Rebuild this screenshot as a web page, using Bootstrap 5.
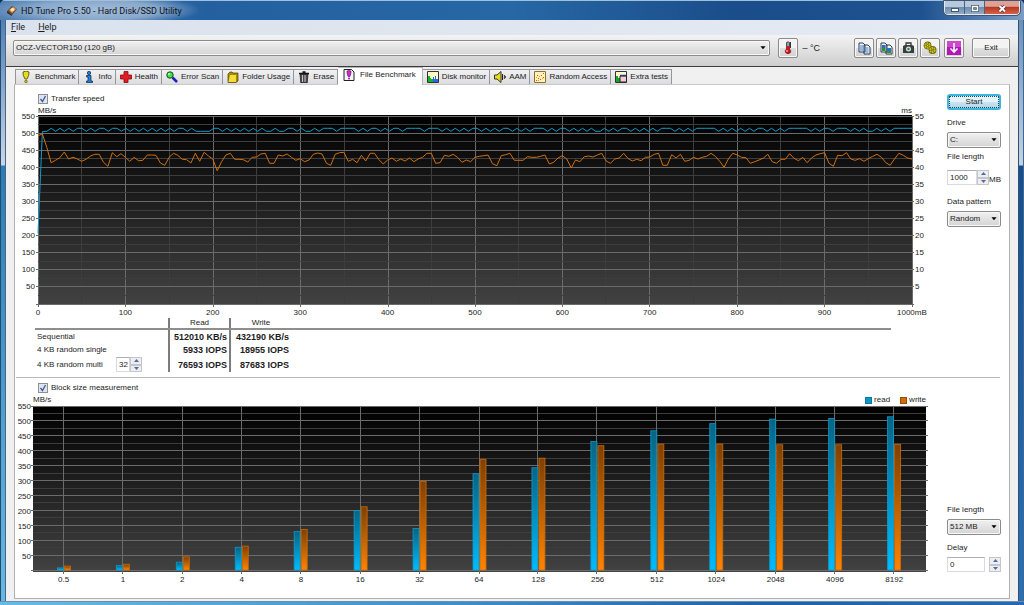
<!DOCTYPE html>
<html lang="en">
<head>
<meta charset="utf-8">
<meta name="viewport" content="width=device-width, initial-scale=1">
<title>HD Tune Pro 5.50 - Hard Disk/SSD Utility</title>
<link href="https://cdn.jsdelivr.net/npm/bootstrap@5.3.0/dist/css/bootstrap.min.css" rel="stylesheet">
<style>
  body { font: 8px/10px "Liberation Sans", Arial, sans-serif; color: #1c1c1c; background: #0c2f5c; }
  .win { min-height: 100vh; border-radius: 5px 5px 0 0; overflow: hidden; background: #2a6db0; }
  .caption-bar { height: 20px; padding-left: 7px; border-top: 1px solid #9fc0dc; color: #10131a;
    background: radial-gradient(ellipse 105px 16px at 95px 9px, #a3bdd9 0, #88a8cb 60%, transparent 100%),
      linear-gradient(90deg, #5582b4 0, #2460a0 20%, #2767a5 50%, #1a4d8a 72%, #1d5190 90%, #7c9dc2 100%); }
  .caption-bar h1 { font: 9px/12px Roboto, sans-serif; }
  .win-ctl { height: 14px; border: 1px solid #e2ebf3; border-top: 0; border-radius: 0 0 4px 4px; outline: 1px solid #42546c; overflow: hidden; }
  .win-ctl button { border: 0; border-right: 1px solid #4c607a; padding: 0; width: 20px; background: linear-gradient(#b7c9dc 45%, #6f8dae 50%, #91adca); }
  .win-ctl .shut { width: 34px; border-right: 0; background: linear-gradient(#dfa195 40%, #b93a22 50%, #d4614a); }
  .side-l { width: 6px; flex: none; border-left: 1px solid #254a70; border-right: 1px solid #4a6580;
    background: linear-gradient(#4f80b8 0, #c9d7e7 145px, #2a7db4 146px, #66b9e4 100%); }
  .side-r { width: 6px; flex: none; border-left: 1px solid #33506f; border-right: 1px solid #3d6793;
    background: linear-gradient(#6b90ba 0, #c4d3e4 145px, #164d8d 146px, #2b70b6 100%); }
  .foot { height: 4px; border-top: 1px solid #6c8fae; background: linear-gradient(90deg, #67bce4, #3b8fcb 45%, #1e60aa 75%, #2769b4); }
  .client { background: #f0f0f0; min-width: 0; }
  .menu { height: 15px; padding-left: 5px; gap: 13px; background: linear-gradient(90deg, #dae2ed, #e5ebf4); font: 9px/14px Roboto, sans-serif; }
  .menu a { color: #1c1c1c; text-decoration: none; }
  .tools { height: 32px; padding: 0 8px 5px 7px; border-bottom: 1px solid #3c3c3c; background: linear-gradient(#f3f3f3, #cecece); }
  .face { border: 1px solid #8b8b8b; border-radius: 2px; color: #1c1c1c; padding: 0; font-size: 8px; line-height: 10px;
    background: linear-gradient(#f3f3f3 48%, #dfdfdf 50%, #d2d2d2); box-shadow: inset 0 0 0 1px #f8f8f8; }
  .tool { width: 20px; height: 20px; display: flex; align-items: center; justify-content: center; }
  .tool-set { gap: 2px; }
  .temp { font-size: 9px; margin-right: 34px; }
  .exit { width: 38px; height: 20px; }
  select.face { appearance: none; width: 100%; height: 16px; padding: 0 12px 0 2px;
    background: url("data:image/svg+xml,%3Csvg xmlns='http://www.w3.org/2000/svg' viewBox='0 0 7 4'%3E%3Cpath d='M.5 0h6L3.500 3.500z'/%3E%3C/svg%3E") no-repeat right 3px center/6px 4px, linear-gradient(#f1f1f1, #d4d4d4); }
  .tabs { padding: 2px 0 0 9px; border: 0; height: 17px; align-items: flex-end; flex-wrap: nowrap; }
  .tabs .nav-link { display: flex; align-items: center; gap: 3px; height: 15px; padding: 0 3px 0 4px; margin: 0; white-space: nowrap; color: #1c1c1c;
    border: 1px solid #95959b; border-width: 1px 1px 0 0; border-radius: 0; background: linear-gradient(#f1f1f2, #dcdce0); }
  .tabs li:first-child .nav-link { border-left-width: 1px; }
  .tabs .nav-link.active { height: 18px; margin-bottom: -1px; padding: 0 6px 3px 5px; gap: 5px; background: #fff; color: #1c1c1c; position: relative; z-index: 1; border-color: #b5b5ba; }
  .tabs svg { width: 12px; height: 12px; }
  .sheet { margin: 0 8px 2px; border: 1px solid #b0b0b4; border-top-color: #c9c9cc; background: #fff; }
  .tick-row { display: flex; align-items: center; gap: 3px; margin-left: 23px; height: 12px; }
  .tick-row input { appearance: none; width: 10px; height: 10px; margin: 0; border: 1px solid #8b8f96;
    background: #dfe5ee url("data:image/svg+xml,%3Csvg xmlns='http://www.w3.org/2000/svg' viewBox='0 0 8 8'%3E%3Cpath d='M1.500 4l2 2.500L6.500 1' fill='none' stroke='%23405a94' stroke-width='1.300'/%3E%3C/svg%3E"); }
  .plot { display: grid; }
  .plot-a { grid-template-columns: 23px 1fr 35px; grid-template-rows: 10px 190px 13px; }
  .plot-b { grid-template-columns: 18px 1fr 21px; grid-template-rows: 12px 166px 14px; }
  .plot svg { grid-column: 2; grid-row: 2; width: 100%; height: 100%; overflow: visible; background: linear-gradient(#000 0, #0a0a0a 15%, #424242 100%); display: block; min-width: 0; }
  .unit { grid-column: 2; grid-row: 1; display: flex; justify-content: space-between; align-items: flex-end; line-height: 8px; }
  .yax { grid-row: 2; display: flex; flex-direction: column; margin: -7px 0 9px; text-align: right; padding-right: 3px; }
  .plot-b .yax { margin: -6px 0 8px; padding-right: 2px; }
  .yax.far { grid-column: 3; text-align: left; padding-left: 3px; }
  .yax span { flex: 1; display: flex; align-items: center; justify-content: flex-end; }
  .yax.far span { justify-content: flex-start; }
  .xax { grid-column: 2; grid-row: 3; display: flex; justify-content: space-between; align-items: center; text-align: center; padding-top: 2px; }
  .plot-a .xax { margin: 0 -20px; }
  .plot-a .xax span { width: 40px; }
  .plot-b .xax { margin: 0 2px 0 1px; padding-top: 2px; }
  .plot-b .xax span { flex: 1; }
  .key { display: inline-block; width: 7px; height: 7px; margin-right: 2px; }
  .key-r { background: #0d96c4; border: 1px solid #0878a0; }
  .key-w { background: #d06c0a; border: 1px solid #9a4c00; margin-left: 10px; }
  .results { width: calc(100% - 76px); margin-left: 20px; table-layout: fixed; border-collapse: collapse; }
  .results th, .results td { height: 14px; padding: 0 2px; line-height: 10px; white-space: nowrap; }
  .results thead th { height: 11px; text-align: center; font-weight: 400; border-bottom: 2px solid #8e8e8e; }
  .results tbody th { font-weight: 400; }
  .results td { text-align: right; font-weight: 700; font-size: 9px; }
  .results .bar-r { border-right: 2px solid #7d7d7d; }
  .c1 { width: 134px; } .c2 { width: 61px; } .c3 { width: 61px; }
  .rule { margin: 5px 9px 0 1px; border-top: 1px solid #b9b9b9; }
  .opts { width: 62px; flex: none; padding: 1px 8px 0 0; }
  .opts label { display: block; height: 10px; }
  .opts-low { padding-bottom: 26px; }
  .start { width: 100%; height: 16px; border: 2px solid #3fb4dc; border-radius: 3px; outline: 1px dotted #1b4a60; outline-offset: -3px; background: linear-gradient(#e4f2fa 48%, #cbe3f1 50%, #b4d6ea); box-shadow: none; }
  .num { display: flex; height: 15px; }
  .num input { width: 0; min-width: 0; flex: 1; border: 1px solid #d8dade; border-top-color: #abadb3; padding: 0 0 0 2px; font-size: 8px; color: #1c1c1c; appearance: textfield; border-radius: 0; }
  .num input::-webkit-inner-spin-button { display: none; }
  .spin { display: flex; flex-direction: column; width: 12px; flex: none; }
  .spin button { flex: 1; padding: 0; border: 1px solid #c3c6cc; background: #eeeeef; display: flex; align-items: center; justify-content: center; }
  .spin svg { width: 5px; height: 3px; fill: #5068a8; }
  .multi { width: 26px; }
</style>
</head>
<body>
<div class="win d-flex flex-column">
  <header class="caption-bar d-flex justify-content-between align-items-start">
    <div class="d-flex align-items-center gap-1 pt-1 mt-0">
      <svg width="10" height="10" viewBox="0 0 10 10"><path d="M0 5l5-5 5 3-5 6z" fill="#70442a"/><path d="M2 4l4-3 3 2-4 4z" fill="#e7a95b"/><circle cx="5.500" cy="3.500" r="1.500" fill="#fff0d5"/><path d="M0 5l5 4v1L0 7z" fill="#292421"/></svg>
      <h1 class="m-0">HD Tune Pro 5.50 - Hard Disk/SSD Utility</h1>
    </div>
    <div class="win-ctl d-flex me-1">
      <button type="button" aria-label="Minimize"><svg class="d-block mx-auto" width="8" height="10"><rect x=".5" y="5.500" width="7" height="3" fill="#fff" stroke="#4a5668"/></svg></button>
      <button type="button" aria-label="Maximize"><svg class="d-block mx-auto" width="8" height="10"><rect x="1.500" y="3.500" width="5" height="4" fill="none" stroke="#4a5668" stroke-width="3"/><rect x="1.500" y="3.500" width="5" height="4" fill="none" stroke="#fff" stroke-width="1.500"/></svg></button>
      <button type="button" class="shut" aria-label="Close"><svg class="d-block mx-auto" width="9" height="10"><path d="M1.500 3l5.500 5.500M7 3L1.500 8.500" stroke="#5b3038" stroke-width="3.500"/><path d="M1.500 3l5.500 5.500M7 3L1.500 8.500" stroke="#fff" stroke-width="2"/></svg></button>
    </div>
  </header>

  <div class="d-flex flex-grow-1">
    <div class="side-l"></div>
    <main class="client flex-grow-1 d-flex flex-column">
      <nav class="menu d-flex" aria-label="Menu"><a href="#"><u>F</u>ile</a><a href="#"><u>H</u>elp</a></nav>

      <div class="tools d-flex align-items-center">
        <select class="face flex-grow-1 w-auto" aria-label="Disk"><option>OCZ-VECTOR150 (120 gB)</option></select>
        <button type="button" class="face tool ms-2" aria-label="Temperature"><svg width="12" height="14" viewBox="0 0 12 14"><path d="M4.500 1.500q1.500-1.500 3 0V8q2 1.500 1 3.500Q6 14 3.500 11.500 2.500 9.500 4.500 8z" fill="#d81414" stroke="#601515" stroke-width=".7"/><path d="M5 1.500h2V5H5z" fill="#39c6dc"/><path d="M8.500 1v6" stroke="#333"/><circle cx="5" cy="10" r=".8" fill="#fff"/></svg></button>
        <span class="ms-1 temp">– °C</span>
        <div class="d-flex">
          <div class="d-flex tool-set">
            <button type="button" class="face tool" aria-label="Copy text"><svg width="13" height="13" viewBox="0 0 13 13"><path d="M1 1h4l2 2v7H1zM6 3h4l2 2v7H6z" fill="#eef6ff" stroke="#333b4a"/><path d="M2 4h3M2 6h3M2 8h3M7.500 6h3M7.500 8h3M7.500 10h3" stroke="#2c82dd"/></svg></button>
            <button type="button" class="face tool" aria-label="Copy picture"><svg width="13" height="13" viewBox="0 0 13 13"><path d="M1 1h4l2 2v7H1zM6 3h4l2 2v7H6z" fill="#eef6ff" stroke="#333b4a"/><path d="M2 3h3v3H2zM7 6h4v3H7z" fill="#2372c8"/><path d="M2 6h3v3H2zM7 9h4v2H7z" fill="#1c9c2c"/></svg></button>
            <button type="button" class="face tool" aria-label="Save picture"><svg width="13" height="12" viewBox="0 0 13 12"><path d="M4 3V1h5v2" fill="none" stroke="#333" stroke-width="1.300"/><path d="M1 4l2-1h7l2 1v7H1z" fill="#393f3f"/><circle cx="6.500" cy="7" r="2.500" fill="#dce6dc"/><circle cx="6.500" cy="7" r="1.200" fill="#2e7c4c"/></svg></button>
            <button type="button" class="face tool" aria-label="Options"><svg width="14" height="14" viewBox="0 0 14 14"><g fill="none" stroke="#615c05" stroke-width="3.400"><circle cx="4.500" cy="4.500" r="2.200"/><circle cx="9.500" cy="9" r="2.200"/></g><g fill="none" stroke="#c9bf14" stroke-width="2.200" stroke-dasharray="1.600 .5"><circle cx="4.500" cy="4.500" r="2.200"/><circle cx="9.500" cy="9" r="2.200"/></g></svg></button>
          </div>
          <button type="button" class="face tool ms-1" aria-label="Download"><svg width="14" height="14" viewBox="0 0 14 14"><rect width="14" height="14" fill="#b018b8"/><path d="M0 0h14v6H0z" fill="#cc48cf"/><path d="M7 2v9M3.500 7.500L7 11l3.500-3.500" fill="none" stroke="#fff" stroke-width="1.600"/></svg></button>
        </div>
        <button type="button" class="face exit ms-2">Exit</button>
      </div>

      <ul class="nav nav-tabs tabs">
        <li><a class="nav-link" href="#"><svg viewBox="0 0 12 12"><path d="M3 1q3-2 6 0 .5 3-2 7H5Q2.500 4 3 1z" fill="#e6df16" stroke="#45430a" stroke-width=".8"/><circle cx="6" cy="10.500" r="1.300" fill="#d8d010" stroke="#45430a" stroke-width=".6"/></svg>Benchmark</a></li>
        <li><a class="nav-link" href="#"><svg viewBox="0 0 12 12"><circle cx="6" cy="2" r="1.700" fill="#1d7fe8" stroke="#0c2238" stroke-width=".7"/><path d="M3.500 4.500H8V10h1.500v1.500h-6V10H5V6H3.500z" fill="#1d7fe8" stroke="#0c2238" stroke-width=".7"/></svg>Info</a></li>
        <li><a class="nav-link" href="#"><svg viewBox="0 0 12 12"><path d="M4 .5h4V4h3.500v4H8v3.500H4V8H.5V4H4z" fill="#e31c22" stroke="#7d0d12" stroke-width=".8"/></svg>Health</a></li>
        <li><a class="nav-link" href="#"><svg viewBox="0 0 12 12"><path d="M6.500 6.500l4.500 4.500" stroke="#1a22b8" stroke-width="2.500"/><circle cx="4" cy="4" r="3.200" fill="#45e04a" stroke="#164c1c"/><circle cx="3" cy="3" r="1" fill="#c8ffc8"/></svg>Error Scan</a></li>
        <li><a class="nav-link" href="#"><svg viewBox="0 0 12 12"><path d="M1 3l2-2h2l1 1h5v8l-2 1.500H1z" fill="#a98b00" stroke="#4a3c00" stroke-width=".7"/><path d="M3 4h6v7H1.500L3 4z" fill="#f5dc3d"/></svg>Folder Usage</a></li>
        <li><a class="nav-link" href="#"><svg viewBox="0 0 12 12"><path d="M2 3h8l-.8 9H2.800z" fill="#4b4b4b" stroke="#151515" stroke-width=".7"/><path d="M1 2.500h10M4.500 1h3" stroke="#151515" stroke-width="1.300"/><path d="M4.500 4v7M7 4v7" stroke="#c6c6c6"/></svg>Erase</a></li>
        <li><a class="nav-link active" aria-current="page" href="#"><svg viewBox="0 0 12 12"><path d="M1 .5h7.500L11 3v8.500H1z" fill="#f4f4f4" stroke="#222"/><path d="M4 2.200q2-1.400 4 0Q8 5 6.800 7.500H5.200Q4 5 4 2.200z" fill="#df25d8" stroke="#4e0d55" stroke-width=".7"/><circle cx="6" cy="9.400" r="1" fill="#a216aa"/></svg>File Benchmark</a></li>
        <li><a class="nav-link" href="#"><svg viewBox="0 0 12 12"><path d="M.5.5h11v11H.5z" fill="#fffbc4" stroke="#333"/><path d="M1 5h2v2h1v1h2v3H1z" fill="#14b52a"/><path d="M6 6h1v2h1V5h1v3h2v3H6z" fill="#2368e8"/></svg>Disk monitor</a></li>
        <li><a class="nav-link" href="#"><svg viewBox="0 0 12 12"><path d="M.5 4H3l4-3.500v11L3 8H.5z" fill="#e9dc19" stroke="#222" stroke-width=".9"/><path d="M8.500 3v6M10 4.500l1.500 1.500L10 7.500" fill="none" stroke="#222" stroke-width="1.100"/></svg>AAM</a></li>
        <li><a class="nav-link" href="#"><svg viewBox="0 0 12 12"><path d="M.5.5h11v11H.5z" fill="#fff3b8" stroke="#8a7330"/><path d="M2 9h1v1H2zM4 7h1v1H4zM3 4h1v1H3zM6 8h1v1H6zM7 4h1v1H7zM9 2h1v1H9zM9 6h1v1H9z" fill="#e4442c"/><path d="M2 6h1v1H2zM5 5h1v1H5zM8 7h1v1H8zM4 9h1v1H4z" fill="#e69a18"/></svg>Random Access</a></li>
        <li><a class="nav-link" href="#"><svg viewBox="0 0 12 12"><path d="M.5.5h11v11H.5z" fill="#fffbc4" stroke="#333"/><path d="M1 5h2v2h2v4H1z" fill="#14a52a"/><path d="M5 5h6.500v6H5z" fill="#f7c9d4" stroke="#222"/><path d="M5 4.500h6.500" stroke="#26349c" stroke-width="1.500"/></svg>Extra tests</a></li>
      </ul>

      <div class="sheet flex-grow-1 d-flex flex-column">
        <section class="d-flex pt-2">
          <div class="flex-grow-1 pt-1-px">
            <div class="tick-row"><input type="checkbox" id="speed" checked><label for="speed">Transfer speed</label></div>
            <div class="plot plot-a">
              <div class="unit"><span>MB/s</span><span>ms</span></div>
              <div class="yax" data-top="550" data-step="50"></div>
              <svg id="speedPlot" viewBox="0 0 875 190" preserveAspectRatio="none" role="img" aria-label="Transfer speed"></svg>
              <div class="yax far" data-top="55" data-step="5"></div>
              <div class="xax"><span>0</span><span>100</span><span>200</span><span>300</span><span>400</span><span>500</span><span>600</span><span>700</span><span>800</span><span>900</span><span>1000mB</span></div>
            </div>
            <table class="results">
              <colgroup><col class="c1"><col class="c2"><col class="c3"><col></colgroup>
              <thead><tr><th class="bar-r"></th><th class="bar-r" scope="col">Read</th><th scope="col">Write</th><th></th></tr></thead>
              <tbody>
                <tr><th class="bar-r" scope="row">Sequential</th><td class="bar-r">512010 KB/s</td><td>432190 KB/s</td><td></td></tr>
                <tr><th class="bar-r" scope="row">4 KB random single</th><td class="bar-r">5933 IOPS</td><td>18955 IOPS</td><td></td></tr>
                <tr><th class="bar-r" scope="row"><div class="d-flex align-items-center justify-content-between pe-4"><label for="multi">4 KB random multi</label>
                  <div class="num multi"><input type="number" id="multi" value="32"><div class="spin"><button type="button" aria-label="More"><svg viewBox="0 0 5 3"><path d="M0 3l2.500-3L5 3z"/></svg></button><button type="button" aria-label="Less"><svg viewBox="0 0 5 3"><path d="M0 0h5L2.500 3z"/></svg></button></div></div></div></th>
                  <td class="bar-r">76593 IOPS</td><td>87683 IOPS</td><td></td></tr>
              </tbody>
            </table>
          </div>
          <form class="opts">
            <button type="button" class="face start">Start</button>
            <label for="drive" class="mt-2">Drive</label>
            <select id="drive" class="face mt-1"><option>C:</option></select>
            <label for="flen" class="mt-1">File length</label>
            <div class="d-flex mt-2 align-items-end">
              <div class="num flex-grow-1"><input type="number" id="flen" value="1000"><div class="spin"><button type="button" aria-label="More"><svg viewBox="0 0 5 3"><path d="M0 3l2.500-3L5 3z"/></svg></button><button type="button" aria-label="Less"><svg viewBox="0 0 5 3"><path d="M0 0h5L2.500 3z"/></svg></button></div></div>
              <span>MB</span>
            </div>
            <label for="pattern" class="mt-2 pt-1 h-auto">Data pattern</label>
            <select id="pattern" class="face mt-1"><option>Random</option></select>
          </form>
        </section>

        <div class="rule"></div>

        <section class="d-flex flex-grow-1 pt-1">
          <div class="flex-grow-1">
            <div class="tick-row"><input type="checkbox" id="block" checked><label for="block">Block size measurement</label></div>
            <div class="plot plot-b">
              <div class="unit align-items-center"><span>MB/s</span><span class="d-flex align-items-center"><i class="key key-r"></i>read<i class="key key-w"></i>write</span></div>
              <div class="yax" data-top="550" data-step="50"></div>
              <svg id="blockPlot" viewBox="0 0 894 166" preserveAspectRatio="none" role="img" aria-label="Block size measurement"></svg>
              <div class="xax" id="blockSizes"></div>
            </div>
          </div>
          <form class="opts opts-low d-flex flex-column justify-content-end">
            <label for="blen">File length</label>
            <select id="blen" class="face mt-1"><option>512 MB</option></select>
            <label for="delay" class="mt-2">Delay</label>
            <div class="num mt-1 gap-1"><input type="number" id="delay" value="0"><div class="spin"><button type="button" aria-label="More"><svg viewBox="0 0 5 3"><path d="M0 3l2.500-3L5 3z"/></svg></button><button type="button" aria-label="Less"><svg viewBox="0 0 5 3"><path d="M0 0h5L2.500 3z"/></svg></button></div></div>
          </form>
        </section>
      </div>
    </main>
    <div class="side-r"></div>
  </div>
  <div class="foot"></div>
</div>

<script src="https://cdn.jsdelivr.net/npm/bootstrap@5.3.0/dist/js/bootstrap.bundle.min.js"></script>
<script>
  document.querySelectorAll('.yax').forEach(ax => {
    const step = +ax.dataset.step;
    for (let v = +ax.dataset.top; v > 0; v -= step) ax.insertAdjacentHTML('beforeend', `<span>${v}</span>`);
  });
  const line = (x1, y1, x2, y2, c) => `<line x1="${x1}" y1="${y1}" x2="${x2}" y2="${y2}" stroke="${c}" shape-rendering="crispEdges" vector-effect="non-scaling-stroke"/>`;
  const MAJOR = '#6b6b6b', MINOR = '#3d3d3d';
  const rows = (w, y0, y1) => {
    let s = '';
    for (let i = 1; i < 22; i += 2) { const y = Math.floor(y0 + (y1 - y0) * i / 22) + .5; s += line(0, y, w, y, MINOR); }
    for (let i = 0; i <= 22; i += 2) { const y = Math.floor(y0 + (y1 - y0) * i / 22) + .5; s += line(-2, y, w + 2, y, MAJOR); }
    return s;
  };

  // Transfer speed: one sample every 5 mB, as depth below the 550 MB/s line
  const write = [80,75,115,161,154,146,129,150,145,150,157,151,141,136,136,160,172,131,143,134,145,157,145,155,154,138,138,139,162,169,145,133,139,151,152,162,133,157,130,141,150,185,158,138,133,151,151,152,159,145,144,
    135,133,163,163,138,141,135,145,154,149,158,153,136,132,135,163,169,136,131,130,157,151,161,139,156,133,133,152,165,153,147,157,150,156,147,158,150,145,133,133,163,161,139,142,136,145,160,153,158,145,142,140,138,164,170,140,137,133,154,154,154,143,145,145,142,138,165,160,147,140,150,177,153,158,143,141,
    144,138,133,156,163,150,147,133,148,156,151,155,145,144,136,133,169,169,137,147,136,157,154,145,150,145,142,133,142,157,175,149,133,138,145,146,163,158,153,147,136,158,163,151,151,134,148,155,145,161,147,138,134,131,163,172,139,140,131,150,154,149,157,149,142,136,145,161,169,150,133,139,147,150];
  const wave = 'LHLHLHLHHLHLHHLHHLHLHLHLHLHLHLHHLHLLLLHHLHLHLHLHLH' +
    'LLHLLHHLHLLHLHHHLHHHHLHLHHLHLHHLHHHHLHHHLHLHLHLHHLHLHLHHLHLHLHHHLHLHHLHLHLHL' +
    'LHLHLHHLHLHLHLHHHLHLHLHHHHHLHLHLHLHLHHLHLHLHHHHHLHLHHLHHHLHLHLLHLHLHHHHH';
  const read = [373, 68].concat([...wave].map(c => c === 'H' ? 58 : 67));
  const trace = (d, c) => `<polyline points="${d.map((v, i) => (875 * i / (d.length - 1)).toFixed(1) + ',' + (2 + (v - 24) / 3).toFixed(1)).join(' ')}" fill="none" stroke="${c}" vector-effect="non-scaling-stroke"/>`;
  let a = '';
  for (let i = 0; i <= 20; i++) { const x = Math.floor(i * 43.75); a += line(x + .5, 2, x + .5, i % 2 ? 190 : 192, i % 2 ? MINOR : MAJOR); }
  a += rows(875, 1, 189) + trace(read, '#129ccb') + trace(write, '#d0700f');
  document.getElementById('speedPlot').innerHTML = a;

  // Block size: MB/s for read and write
  const blocks = [['0.5',7,13],['1',15,19],['2',26,44],['4',76,80],['8',129,136],['16',199,212],['32',139,297],['64',323,371],['128',343,375],['256',431,417],['512',467,422],['1024',491,422],['2048',506,420],['4096',508,420],['8192',514,421]];
  let b = `<defs><linearGradient id="gr" x2="0" y2="1"><stop stop-color="#086484"/><stop offset="1" stop-color="#00bcff"/></linearGradient>
    <linearGradient id="gw" x2="0" y2="1"><stop stop-color="#7e4002"/><stop offset="1" stop-color="#ff8400"/></linearGradient></defs>` + rows(894, 0, 164);
  const bar = (x, v, fill, edge) => { const h = v * 164 / 550; return `<rect x="${x}" y="${164 - h}" width="6" height="${h}" fill="url(#${fill})" stroke="${edge}" stroke-width="1" stroke-opacity=".8"/>`; };
  blocks.forEach(([n, r, w], i) => {
    const x = Math.round(1 + 59.4 * (i + .5));
    b += line(x - .5, 1, x - .5, 168, MAJOR) + bar(x - 6.5, r, 'gr', '#0d9ccc') + bar(x + .5, w, 'gw', '#cf6c08');
  });
  document.getElementById('blockPlot').innerHTML = b;
  document.getElementById('blockSizes').innerHTML = blocks.map(r => `<span>${r[0]}</span>`).join('');
</script>
</body>
</html>
